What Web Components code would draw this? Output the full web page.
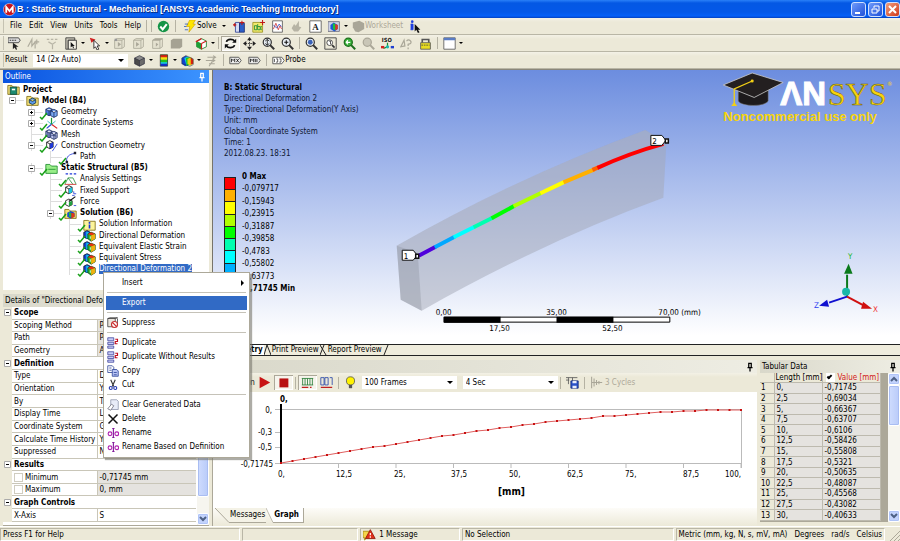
<!DOCTYPE html>
<html lang="en">
<head>
<meta charset="utf-8">
<title>B : Static Structural - Mechanical</title>
<style>
  html, body { height: 100%; }
  body {
    margin: 0;
    font: 8px/10px "DejaVu Sans Condensed", "Open Sans", sans-serif;
    color: #000;
    background: #ece9d8;
    --face: #ece9d8;
    --line: #aca899;
    --pick: #316ac5;
  }
</style>
</head>
<body>
<mech-app></mech-app>

<script>
  // Every icon is drawn on a 16x16 grid
  const cube = (a, b, c) => `<path d="M2 5 8 2l6 3-6 3z" fill="${a}"/><path d="M2 5l6 3v7l-6-3z" fill="${b}"/><path d="M14 5 8 8v7l6-3z" fill="${c}"/><path d="M2 5 8 2l6 3v7l-6 3-6-3zl6 3 6-3M8 8v7" fill="none" stroke="#223" stroke-width=".8"/>`;
  const twin = (a, b) => `<path d="M1 4l4-2 4 2v6l-4 2-4-2zl4 2 4-2M5 6v6" fill="${a}" stroke="#125" stroke-width=".9"/><path d="M7 6l4-2 4 2v6l-4 2-4-2zl4 2 4-2M11 8v6" fill="${b}" stroke="#125" stroke-width=".9"/>`;
  const lens = (fill, stroke, sign) => `<circle cx="6.5" cy="6.5" r="5" fill="${fill}" stroke="${stroke}" stroke-width="1.5"/><path d="M10 10l5 5" stroke="${stroke}" stroke-width="2.5"/>${sign}`;
  const wire = extra => `<path d="M2 4h9v10H2zM2 4l3-2h9l-3 2M14 2v10l-3 2" fill="#e4e1d0" stroke="#aaa798"/>${extra}`;
  const folder = inner => `<path d="M1 3h5l2 2h7v9H1z" fill="#f6e27a" stroke="#7d6a13"/>${inner}`;

  const ICONS = {
    app: `<circle cx="8" cy="8" r="7.5" fill="#c8141c" stroke="#fff" stroke-width=".6"/><path d="M4 12V5l4 5 4-5v7" fill="none" stroke="#fff" stroke-width="2.2"/>`,
    ok: `<circle cx="8" cy="8" r="7" fill="#159447"/><path d="M4 8l3 3.5L12 5" fill="none" stroke="#fff" stroke-width="2.5"/>`,
    bolt: `<path d="M7 0h7l-3 5h3l-8 10 1-7H3z" fill="#ffe600" stroke="#c79a00" stroke-width=".7"/><path d="M1 5h4M0 8h3M1 12h4" stroke="#2a58c0"/>`,
    chartnew: `<path d="M3 3h5v12H3z" fill="#d6dcf4" stroke="#2b3d96"/><path d="M8 4h6v11H8z" fill="#2d5fc8" stroke="#1c2d70"/><path d="M0 6h4M2 4v4M11 1v5M8 3h6" stroke="#c01818" stroke-width="1.3"/>`,
    note: `<path d="M1 3h12v12H1z" fill="#f2e96c" stroke="#96901c"/><path d="M3 7h3v5H3zM7 5v7h3V8H7M12 8h-1v4h1" fill="none" stroke="#183"/><path d="M13 0v6M10 3h6" stroke="#c01818" stroke-width="1.3"/>`,
    figure: `<path d="M2 1h12v14H2z" fill="#fff" stroke="#555"/><path d="M3 11l3-7 3 8 2-5 2 4" fill="none" stroke="#d03030"/><path d="M3 6l4 4 3-5 3 3" fill="none" stroke="#3050c8"/>`,
    ghost: `<path d="M2 10l3-5 2 2 4-6v7l3 1-4 5H5z" fill="#b7b4a5"/>`,
    boxA: `<path d="M1 1h14v14H1z" fill="#fff" stroke="#555"/><text x="4" y="12" font-size="11" font-weight="bold" font-family="Liberation Serif" fill="#222">A</text>`,
    picture: `<path d="M0 2h14v12H0z" fill="#cfd4e8" stroke="#667"/><path d="M3 6l4-3 5 3v5l-4 3-5-3z" fill="#1c56d8"/><path d="M6 4l3 1v8l-3-2z" fill="#19c040"/><path d="M9 5l3 1v5l-3 2z" fill="#e23818"/>`,
    sheet: `<path d="M1 3l8-2 6 3v7l-7 4-4-1-3-5z" fill="#a9a698"/>`,
    info: `<path d="M3 1h2v2H3zM2 5h3v7H2" fill="#1e3ee0" stroke="#1e3ee0"/><path d="M7 5v9l2-2 2 4 2-1-2-3h3z" fill="#111"/>`,
    tag: `<path d="M0 1h13l2 3-2 3H0z" fill="#ddd" stroke="#333"/><path d="M2 4h9" stroke="#111" stroke-dasharray="2 1"/><path d="M6 7v8l2-2 2 3 1-1-1-3h3z" fill="#222"/>`,
    tag2: `<path d="M1 12l5-9v8l4-5v8M9 6h6M12 3v6" fill="none" stroke="#b0ad9e" stroke-width="1.5"/>`,
    tag3: `<path d="M1 3h3M6 3h3M11 3h3M3 6l5 3 4-3M8 9v6" fill="none" stroke="#b8b5a6" stroke-width="1.5"/>`,
    modebox: `<path d="M1 1h11v3H4v11H1z" fill="#ccc9bb" stroke="#333"/><path d="M4 4h10v11H4z" fill="#f4f2e6" stroke="#222"/><path d="M7 6v7l2-2 1 3 1-1-1-2h2z" fill="#111"/>`,
    pick: `<path d="M1 1l7 2-5 4z" fill="#d02020"/><path d="M6 4v10l2-2 2 4 2-1-2-4h3z" fill="#fff" stroke="#111"/>`,
    wire1: wire('<path d="M2 2h3v3H2z" fill="#999"/><path d="M6 6v6l4-3z" fill="#aaa798"/>'),
    wire2: wire('<path d="M5 6v6l4-3z" fill="#aaa798"/>'),
    wire3: wire('<path d="M2 4l3-2h9l-3 2z" fill="#aaa798"/><path d="M6 7v5l3-3z" fill="#aaa798"/>'),
    wire4: `<path d="M1 4l3-2h11v10l-3 2H1z" fill="#a5a293"/>`,
    extend: `<path d="M2 5l6-3 6 3v7l-6 3-6-3z" fill="#fff" stroke="#157a22"/><path d="M2 5l6 3v7l-6-3z" fill="#1da035"/><path d="M8 8v7M8 8l6-3M1 6l7-4" stroke="#d02020" stroke-width="1.5"/>`,
    rotate: `<path d="M3 6c1-4 8-4 10-1M13 10c-1 4-8 4-10 1" fill="none" stroke="#111" stroke-width="2"/><path d="M15 2v5h-5zM1 14V9h5z" fill="#111"/>`,
    pan: `<path d="M8 0l3 4H5zM8 16l3-4H5zM0 8l4-3v6zM16 8l-4-3v6z" fill="#222"/><path d="M8 3v10M3 8h10" stroke="#222" stroke-dasharray="2 1"/>`,
    zoom: lens('#e8eef4', '#333', '<path d="M6.5 3v7M4 5l2.5-2L9 5M4 8l2.5 2L9 8" fill="none" stroke="#111"/>'),
    zoomin: lens('#e8eef4', '#333', '<path d="M6.5 4v5M4 6.5h5" stroke="#111" stroke-width="1.3"/>'),
    zoombox: lens('#e8eef4', '#333', '<circle cx="6.5" cy="6.5" r="3" fill="#3a62b8"/>'),
    zoomfit: `<path d="M1 1h14v14H1z" fill="none" stroke="#333"/><circle cx="7" cy="7" r="3.5" fill="#fff" stroke="#333"/><path d="M10 10l3 3" stroke="#333" stroke-width="2"/><path d="M6 5h2v4" fill="none" stroke="#333"/>`,
    zoomprev: lens('#38b038', '#1c6e1c', '<path d="M9 6.5H4M6 4L4 6.5 6 9" fill="none" stroke="#fff" stroke-width="1.5"/>'),
    zoomnext: lens('#c9c6b7', '#aaa798', ''),
    iso: `<text x="1" y="6" font-size="7" font-weight="bold" fill="#111">ISO</text><path d="M8 7v5l-5 2" fill="none" stroke="#1a9030" stroke-width="1.5"/><circle cx="8" cy="12" r="2" fill="#18b8b0"/><path d="M0 11h4v3H0z" fill="#d02020"/><path d="M12 11h4v3h-4z" fill="#2040d0"/>`,
    look: `<path d="M1 12l4-8 1 7zM8 5c3-3 7 0 5 3l-3 1v2M10 13v2" fill="none" stroke="#aaa798" stroke-width="1.5"/>`,
    lock: `<path d="M4 7V3h8v4" fill="none" stroke="#555" stroke-width="2"/><path d="M2 7h12v8H2z" fill="#e8dc20" stroke="#555"/><path d="M3 10h10" stroke="#444" stroke-dasharray="2 1"/>`,
    window: `<path d="M1 1h14v14H1z" fill="#fff" stroke="#555"/><path d="M1 1h14v3H1z" fill="#5a7cc4"/>`,
    solid: cube('#8b8b8b', '#4a4a4a', '#6b6b6b'),
    bands: `<path d="M4 1h9v14H4z" fill="#1030d0"/><path d="M4 1h9v11H4z" fill="#18c8d8"/><path d="M4 1h9v9H4z" fill="#20c020"/><path d="M4 1h9v6H4z" fill="#f0e010"/><path d="M4 1h9v3H4z" fill="#e02010"/><path d="M4 1h9v14H4z" fill="none" stroke="#333" stroke-width=".8"/>`,
    rainbow: `<path d="M1 5l5-3 4 3v8l-5 2-4-3z" fill="#1040d0"/><path d="M4 5l4-2 3 3v7l-4 2z" fill="#10c8e0"/><path d="M6 5l5-1v8l-4 3z" fill="#20c020"/><path d="M8 6l4-2 3 3v5l-4 2-3-2z" fill="#e8d010"/><path d="M12 4l3 3v5l-3 1z" fill="#e02010"/><path d="M1 5l5-3 9 4v7l-4 2-10-3z" fill="none" stroke="#234" stroke-width=".7"/>`,
    vectors: `<path d="M3 4h10M1 8h10M5 12h7M10 2l3 2-3 2M9 6l3 2-3 2M5 15l4-6" fill="none" stroke="#a9a698" stroke-width="1.3"/>`,
    max: `<path d="M1 4h11l3 4-3 4H1z" fill="#eee" stroke="#444"/><path d="M3 10V6l2 2 2-2v4M9 6l3 4M12 6l-3 4" fill="none" stroke="#111"/>`,
    min: `<path d="M1 4h11l3 4-3 4H1z" fill="#eee" stroke="#444"/><path d="M3 10V6l2 2 2-2v4M9 6v4M11 10V6" fill="none" stroke="#111"/>`,
    probe: `<path d="M1 4h11l3 4-3 4H1z" fill="#fff" stroke="#444"/><path d="M3 6v4M5 6h2v4H5M9 6h2v4H9" fill="none" stroke="#111" stroke-width=".8"/>`,
    pin: `<path d="M5 2h6M6 2v6M10 2v6M4 9h8M8 9v6" stroke="currentColor" stroke-width="2"/>`,
    project: folder('<path d="M4 5h8v9H4z" fill="#1b8a70" stroke="#0e4a3c"/><path d="M6 7h4v2H6z" fill="#fff"/>'),
    model: folder('<path d="M4 7l4-2 4 2v4l-4 2-4-2zl4 2 4-2" fill="#5d9ae8" stroke="#134"/>'),
    geometry: twin('#4d7fe0', '#7aa8f2'),
    coords: `<path d="M8 9V1" stroke="#1b9a30" stroke-width="1.5"/><path d="M8 9l-6 5" stroke="#2448d8" stroke-width="1.5"/><path d="M8 9l7 5" stroke="#d82020" stroke-width="1.5"/><path d="M8 9L3 5M8 9l5-4" stroke="#19b0b8"/>`,
    mesh: twin('#9aa2e0', '#c2c8f4') + '<path d="M3 3v8M9 9h4M13 5v8M7 9l8 1" stroke="#125" stroke-width=".5"/>',
    construct: `<path d="M2 4l4-2 4 2v6l-4 2-4-2zl4 2 4-2M6 6v6" fill="#fff" stroke="#111"/><path d="M6 6l4-2v6l-4 2z" fill="#2038d8"/><path d="M9 15l6-9" stroke="#2038d8"/>`,
    path: `<path d="M3 13c0-6 3-9 10-10" fill="none" stroke="#2038d8"/><path d="M2 12h3v3H2zM12 1h3v3h-3z" fill="#223"/>`,
    static: `<path d="M1 3h5l2 2h7v9H1z" fill="#98ee88" stroke="#1c8a2c"/><path d="M4 9h9" stroke="#1c8a2c"/>`,
    analysis: `<path d="M2 1h3M7 1h3M12 1h3" stroke="#2038d8" stroke-width="1.5"/><path d="M1 14l4-8h6l4 8M5 6l6 8" fill="none" stroke="#2b9040"/><path d="M1 14h14" stroke="#d02020"/>`,
    support: `<path d="M2 4l4-2 4 2v6l-4 2-4-2zl4 2 4-2M6 6v6" fill="#fff" stroke="#111"/><path d="M6 6l4-2v6l-4 2z" fill="#19c4e0"/><path d="M12 9v3h3M10 14h3" stroke="#2038d8" fill="none"/>`,
    force: `<path d="M2 7l4-2 4 2v5l-4 2-4-2z" fill="#fff" stroke="#111"/><path d="M6 8l8-6" stroke="#111" stroke-width="1.5"/><path d="M6 9l4-2v5l-4 2z" fill="#20a040"/><path d="M12 13h3" stroke="#2038d8"/>`,
    solution: folder('<path d="M4 7l4-2 5 2v5l-5 2-4-2z" fill="#1545d8"/><path d="M6 6l3 1v6l-3-1z" fill="#20b840"/><path d="M9 7l4 1v4l-4 2z" fill="#e03a10"/>'),
    solinfo: `<path d="M1 3h5l2 1h7v11H1z" fill="#fdf49a" stroke="#7d6a13"/><path d="M8 5v2M8 8v5" stroke="#1a34d8" stroke-width="2"/>`,
    result: `<path d="M1 4l4-2 4 2v6l-4 2-4-2z" fill="#1545d8" stroke="#012"/><path d="M4 3l3 1v7l-3 1z" fill="#12c0e8"/><path d="M6 6l4-2 5 2v6l-5 3-4-3z" fill="#28b828" stroke="#142"/><path d="M6 6l4-2 5 2-5 2z" fill="#e83010"/><path d="M10 8l5-2v6l-5 3z" fill="#f0b010"/><path d="M9 9v3" stroke="#fff"/>`,
    suppress: `<path d="M1 2h10v11H1zM1 2l3-1h10l-3 1M14 2v9" fill="#e9e4dc" stroke="#333"/><circle cx="10" cy="10" r="4" fill="#fff" stroke="#c83030" stroke-width="1.5"/><path d="M7 7l6 6" stroke="#c83030" stroke-width="1.5"/>`,
    duplicate: `<path d="M1 1h8v4H1zM1 7h8v3H1zM1 12h8v3H1z" fill="#c8cdf5" stroke="#3a3f9a"/><path d="M11 3h3v3h-3v3h3" fill="none" stroke="#c01020" stroke-width="1.5"/>`,
    copy: `<path d="M1 1h6l2 2v7H1z" fill="#fff" stroke="#223a90"/><path d="M7 6h6l2 2v7H7z" fill="#b8c4f4" stroke="#223a90"/><path d="M3 4h3M3 7h3M9 10h4M9 13h4" stroke="#223a90"/>`,
    cut: `<path d="M5 1l4 9M11 1L7 10" stroke="#333" stroke-width="1.5"/><circle cx="5" cy="12" r="2" fill="none" stroke="#2238b0" stroke-width="1.5"/><circle cx="11" cy="12" r="2" fill="none" stroke="#2238b0" stroke-width="1.5"/>`,
    clear: `<path d="M5 1h8l2 2v11H5z" fill="#e8ecf8" stroke="#8a90a8"/><path d="M1 13l5-6 3 2-4 6z" fill="#fff" stroke="#667"/>`,
    remove: `<path d="M2 2l12 12M14 2L2 14" stroke="#111" stroke-width="2"/>`,
    rename: `<circle cx="4" cy="9" r="2.5" fill="none" stroke="#b020b0" stroke-width="1.5"/><circle cx="13" cy="9" r="2.5" fill="none" stroke="#b020b0" stroke-width="1.5"/><path d="M8.5 2v12M7 2h3M7 14h3" stroke="#811a9a" stroke-width="1.5"/>`,
    play: `<path d="M2 1l13 7-13 7z" fill="#c81414"/>`,
    stop: `<path d="M3 3h11v11H3z" fill="#b81010"/>`,
    dist: `<path d="M1 3h14M1 11h14M2 3v8M5 3v8M8 3v8M11 3v8M14 3v8" stroke="#247a34"/><path d="M1 14h8M11 14h2" stroke="#c02020" stroke-width="1.5"/>`,
    keys: `<path d="M1 2h4v9H1zM6 2h4v9H6zM12 2h3v9" fill="none" stroke="#2444a8"/><path d="M1 14h14" stroke="#c02020" stroke-width="1.5"/>`,
    bulb: `<circle cx="8" cy="6" r="5" fill="#fff200" stroke="#555"/><path d="M6 11h4v4H6z" fill="#555"/>`,
    export: `<path d="M0 2h14M3 2v8M0 5h4M8 2v4" stroke="#555"/><path d="M6 6h9v9H6z" fill="#2a52c8" stroke="#122a78"/><path d="M8 6h5v3H8zM8 12h5v3H8z" fill="#e8ecfa"/>`,
    cycles: `<path d="M2 1v14M2 8h13M5 3v10M8 5v6M11 6v4" stroke="#a9a698" stroke-width="1.3"/>`,
    message: `<path d="M0 4h8v8H4l-2 3v-3H0z" fill="#f5d44a" stroke="#a88a10"/><path d="M9 2l6 11H3z" fill="#e03018" stroke="#901408"/><path d="M9 6v3M9 10v2" stroke="#fff" stroke-width="1.5"/>`
  };

  // Registers an element whose shadow root is cloned from a template
  function define(name, html, setup) {
    const template = document.createElement('template');
    template.innerHTML = html;
    customElements.define(name, class extends HTMLElement {
      constructor() {
        super();
        this.attachShadow({ mode: 'open' }).appendChild(template.content.cloneNode(true));
      }
      connectedCallback() {
        if (setup && !this.ready) {
          this.ready = true;
          setup.call(this, this.shadowRoot);
        }
      }
    });
  }

  define('app-icon', `
    <style>
      :host { display: inline-block; width: 13px; height: 13px; flex: none; }
      svg { display: block; width: 100%; height: 100%; }
    </style>
    <svg viewBox="0 0 16 16" aria-hidden="true"></svg>`, function (root) {
    root.querySelector('svg').innerHTML = ICONS[this.getAttribute('name')] || '';
  });

  // Toolbar button: icon, an optional text and an optional drop-down caret
  define('tool-button', `
    <style>
      :host { display: block; flex: none; }
      button {
        display: flex; align-items: center; height: 15px; padding: 0 3px;
        border: 0; background: none; font: inherit; color: inherit;
      }
      :host([drop]) button { padding-right: 1px; }
      :host([pressed]) button { background: #f6f4ec; box-shadow: inset 1px 1px #aca899, inset -1px -1px #fff; }
      :host([dim]) { color: #aca899; }
      i { display: none; margin-left: 3px; border: 2px solid transparent; border-top-color: #000; border-bottom: 0; }
      :host([drop]) i { display: block; }
    </style>
    <button type="button"><slot></slot><i></i></button>`, function (root) {
    const icon = document.createElement('app-icon');
    icon.setAttribute('name', this.getAttribute('icon'));
    const button = root.querySelector('button');
    button.prepend(icon);
    if (!this.textContent) button.setAttribute('aria-label', this.getAttribute('icon'));
  });

  define('tool-bar', `
    <style>
      :host {
        display: flex; align-items: center; box-sizing: border-box; height: 17px; padding-left: 5px;
        background: linear-gradient(#f3f1e6, #ece9d8 4px);
        border-bottom: 1px solid #b9b6a6;
      }
      :host::before { content: ""; width: 2px; height: 14px; margin: 0 1px 0 -3px; border-right: 1px solid #c5c2b2; box-sizing: border-box; }
      ::slotted(hr) { width: 1px; height: 12px; margin: 0 2px; border: 0; background: #b5b2a3; }
    </style>
    <slot></slot>`);

  define('select-box', `
    <style>
      :host { display: grid; height: 13px; background: #fff; align-items: center; }
      select, i { grid-area: 1 / 1; }
      select {
        appearance: none; width: 100%; height: 13px; padding: 0 3px; border: 0;
        background: none; font: inherit; color: inherit;
      }
      i { justify-self: end; margin-right: 4px; border: 3px solid transparent; border-top-color: #000; border-bottom: 0; pointer-events: none; }
    </style>
    <select><option></option></select><i></i>`, function (root) {
    root.querySelector('select').setAttribute('aria-label', this.getAttribute('label'));
    root.querySelector('option').textContent = this.getAttribute('value');
  });

  define('scroll-bar', `
    <style>
      :host { display: flex; flex-direction: column; width: 12px; background: #f6f5ef; }
      button {
        height: 12px; padding: 0; border: 1px solid #fff; border-radius: 2px;
        background: #c3d3fc; box-shadow: inset 0 0 0 1px #b0c4f8;
      }
      svg { display: block; width: 8px; margin: auto; }
      span { flex: var(--thumb, 1); border: 1px solid #fff; border-radius: 2px; background: linear-gradient(90deg, #cfdcfe, #b9cbf9); box-shadow: inset 0 0 0 1px #a9bdf2; }
      i { flex: var(--rest, 1); }
    </style>
    <button type="button" aria-label="Up"><svg viewBox="0 0 8 8"><path d="M1 6l3-3 3 3" fill="none" stroke="#4d6185" stroke-width="2"/></svg></button>
    <span></span><i></i>
    <button type="button" aria-label="Down"><svg viewBox="0 0 8 8"><path d="M1 2l3 3 3-3" fill="none" stroke="#4d6185" stroke-width="2"/></svg></button>`);

  define('panel-title', `
    <style>
      :host {
        display: flex; align-items: center; justify-content: space-between; box-sizing: border-box;
        height: 13px; padding: 0 2px; white-space: nowrap;
        background: linear-gradient(90deg, #d9d8ca, #eeede3);
      }
      :host([active]) { color: #fff; background: linear-gradient(90deg, #0a54e0, #3c94ff); }
      app-icon { width: 10px; height: 10px; }
    </style>
    <slot></slot><app-icon name="pin"></app-icon>`);

  define('title-bar', `
    <style>
      :host {
        display: flex; align-items: center; height: 18px; padding-left: 3px; color: #fff;
        background: linear-gradient(#2a80f8, #0458e4 3px, #0458e8 12px, #0560f8 16px, #0340c0);
      }
      h1 { flex: 1; margin: 0 0 0 1px; font: bold 9px/16px "Liberation Sans", sans-serif; text-shadow: 1px 1px #0a2a80; white-space: nowrap; }
      button { width: 15px; height: 15px; margin-left: 2px; padding: 1px; border: 1px solid #cfe0ff; border-radius: 3px; background: linear-gradient(135deg, #6f9bfb, #1f50d8); }
      button:last-child { background: linear-gradient(135deg, #f0a080, #d03818); }
      svg { display: block; }
    </style>
    <app-icon name="app"></app-icon>
    <h1><slot></slot></h1>
    <button type="button" aria-label="Minimize"><svg viewBox="0 0 11 11"><path d="M2 9h5" stroke="#fff" stroke-width="2"/></svg></button>
    <button type="button" aria-label="Restore"><svg viewBox="0 0 11 11"><path d="M4 4V2h5v5H7M2 5h5v4H2z" fill="none" stroke="#fff"/></svg></button>
    <button type="button" aria-label="Close"><svg viewBox="0 0 11 11"><path d="M2 2l7 7M9 2L2 9" stroke="#fff" stroke-width="2"/></svg></button>`);

  define('menu-bar', `
    <style>
      :host { display: flex; width: 137px; padding-left: 2px; justify-content: space-between; }
      button { padding: 0 3px; border: 0; background: none; font: inherit; }
    </style>`, function (root) {
    for (const name of ['File', 'Edit', 'View', 'Units', 'Tools', 'Help']) {
      const button = document.createElement('button');
      button.type = 'button';
      button.textContent = name;
      root.appendChild(button);
    }
  });

  // depth, icon, label, flags: + collapsed, - expanded, v check mark, b bold, s selected
  const TREE = [
    [0, 'project', 'Project', 'b'],
    [1, 'model', 'Model (B4)', '-b'],
    [2, 'geometry', 'Geometry', '+v'],
    [2, 'coords', 'Coordinate Systems', '+v'],
    [2, 'mesh', 'Mesh', 'v'],
    [2, 'construct', 'Construction Geometry', '-v'],
    [3, 'path', 'Path', 'v'],
    [2, 'static', 'Static Structural (B5)', '-vb'],
    [3, 'analysis', 'Analysis Settings', 'v'],
    [3, 'support', 'Fixed Support', 'v'],
    [3, 'force', 'Force', 'v'],
    [3, 'solution', 'Solution (B6)', '-vb'],
    [4, 'solinfo', 'Solution Information', 'v'],
    [4, 'result', 'Directional Deformation', 'v'],
    [4, 'result', 'Equivalent Elastic Strain', 'v'],
    [4, 'result', 'Equivalent Stress', 'v'],
    [4, 'result', 'Directional Deformation 2', 'vs']
  ];

  define('outline-tree', `
    <style>
      :host { display: block; background: #fff; padding-top: 1px; }
      ul { display: grid; grid-auto-rows: 1fr; height: 191px; margin: 0; padding: 0; list-style: none; }
      li { display: flex; align-items: center; padding-left: calc(var(--depth) * 19px - 14px); min-height: 0; white-space: nowrap; }
      li.root { padding-left: 4px; }
      .twig { align-self: stretch; display: flex; align-items: center; width: 18px; background: linear-gradient(#ddd, #ddd) 4px 0 / 1px 100% no-repeat, linear-gradient(#ddd, #ddd) 4px 50% / 12px 1px no-repeat; }
      li.root .twig { display: none; }
      .top .twig { background: linear-gradient(#ddd, #ddd) 4px 50% / 12px 1px no-repeat; }
      .twig svg { width: 7px; height: 7px; margin-left: 1px; }
      .pic { position: relative; height: 13px; width: 14px; margin-right: 2px; }
      .tick { position: absolute; left: -6px; bottom: -1px; width: 9px; height: 8px; }
      .b { font-weight: bold; }
      .s .name { background: var(--pick); color: #fff; }
    </style>
    <ul role="tree"></ul>`, function (root) {
    root.querySelector('ul').innerHTML = TREE.map(([depth, icon, name, flags]) => {
      const classes = [...flags].filter(f => /[bs]/.test(f));
      if (depth === 0) classes.push('root');
      if (depth === 1) classes.push('top');
      const box = /[+-]/.test(flags)
        ? `<svg viewBox="0 0 7 7"><path d="M.5.5h6v6h-6z" fill="#fff" stroke="#aaa"/><path d="M2 3.5h3${flags.includes('+') ? 'M3.5 2v3' : ''}" stroke="#000"/></svg>` : '';
      const tick = flags.includes('v')
        ? '<svg class="tick" viewBox="0 0 9 8"><path d="M1 5l2 2 5-6" fill="none" stroke="#18a018" stroke-width="1.5"/></svg>' : '';
      return `<li role="treeitem" style="--depth:${depth}" class="${classes.join(' ')}"><span class="twig">${box}</span><span class="pic"><app-icon name="${icon}"></app-icon>${tick}</span><span class="name">${name}</span></li>`;
    }).join('');
  });

  // Group rows hold one item, property rows two; the third marks a read-only value
  const DETAILS = [
    ['Scope'],
    ['Scoping Method', 'Path', 1], ['Path', 'Path', 1], ['Geometry', 'All Bodies', 1],
    ['Definition'],
    ['Type', 'Directional Deformation'], ['Orientation', 'Y Axis'], ['By', 'Time'], ['Display Time', 'Last'],
    ['Coordinate System', 'Global Coordinate System'], ['Calculate Time History', 'Yes'], ['Suppressed', 'No'],
    ['Results'],
    ['Minimum', '-0,71745 mm', 1, 'box'], ['Maximum', '0, mm', 1, 'box'],
    ['Graph Controls'],
    ['X-Axis', 'S']
  ];

  define('details-grid', `
    <style>
      :host { display: flex; background: #fff; border-bottom: 1px solid var(--line); overflow: hidden; }
      table { flex: 1; height: 215px; table-layout: fixed; width: 0; border-collapse: collapse; }
      col:first-child { width: 9px; }
      col:nth-child(2) { width: 85px; }
      th, td { padding: 0 0 0 2px; border-bottom: 1px solid #c9c6b8; text-align: left; font-weight: normal; white-space: nowrap; overflow: hidden; line-height: 9px; }
      td:first-child { background: var(--face); border-color: var(--face); padding: 0; }
      td:last-child { border-left: 1px solid #c9c6b8; }
      .group th { font-weight: bold; border-color: #c9c6b8; }
      .fixed td:last-child { background: #e5e3df; }
      input { appearance: none; width: 9px; height: 9px; margin: 0 2px 0 0; border: 1px solid #d0cdc0; background: #fff; vertical-align: middle; }
      svg { display: block; width: 7px; height: 7px; margin-left: 1px; }
      scroll-bar { --thumb: 11; --rest: 1; margin-left: 1px; }
    </style>
    <table><colgroup><col><col><col></colgroup><tbody></tbody></table><scroll-bar></scroll-bar>`, function (root) {
    const fold = '<svg viewBox="0 0 7 7"><path d="M.5.5h6v6h-6z" fill="#fff" stroke="#aaa"/><path d="M2 3.5h3" stroke="#000"/></svg>';
    root.querySelector('tbody').innerHTML = DETAILS.map(([name, value, fixed, box]) => {
      if (!value) return `<tr class="group"><td>${fold}</td><th colspan="2">${name}</th></tr>`;
      const label = box ? `<label><input type="checkbox">${name}</label>` : name;
      return `<tr class="${fixed ? 'fixed' : ''}"><td></td><th>${label}</th><td>${value}</td></tr>`;
    }).join('');
  });

  const BANDS = ['#ff0000', '#ffb000', '#ffff00', '#b0ff00', '#00ff00', '#00ffb0', '#00ffff', '#00b0ff', '#0050ff'];
  const LEVELS = ['0 Max', '-0,079717', '-0,15943', '-0,23915', '-0,31887', '-0,39858', '-0,4783', '-0,55802', '-0,63773', '-0,71745 Min'];

  define('model-view', `
    <style>
      :host { display: block; position: relative; overflow: hidden; padding: 12px 0 0 11px; box-sizing: border-box; background: linear-gradient(#6c8ddf, #fff 97%); border-left: 1px solid #77746a; }
      .notes { line-height: 11px; color: #101830; }
      .notes b { color: #000; }
      p { margin: 0; }
      .legend { display: flex; gap: 6px; height: 124px; margin-top: 12px; }
      .bands { display: flex; flex-direction: column; width: 12px; margin: 6px 0; box-sizing: border-box; border: 1px solid #222; }
      .bands i { flex: 1; border-bottom: 1px solid #222; }
      .levels { display: flex; flex-direction: column; justify-content: space-between; line-height: 12px; }
      .levels span:first-child, .levels span:last-child { font-weight: bold; }
      svg { position: absolute; inset: 0; width: 100%; height: 100%; }
    </style>
    <div class="notes">
      <p><b>B: Static Structural</b></p><p>Directional Deformation 2</p><p>Type: Directional Deformation(Y Axis)</p>
      <p>Unit: mm</p><p>Global Coordinate System</p><p>Time: 1</p><p>2012.08.23. 18:31</p>
    </div>
    <div class="legend"><div class="bands"></div><div class="levels"></div></div>
    <svg viewBox="212 71 688 274" preserveAspectRatio="xMaxYMin meet">
      <!-- beam -->
      <path d="M396 247Q515 179 645 131L666 144 663 199Q545 242 421 312L400 301z" fill="#a4a8b6" opacity=".5"/>
      <path d="M396 247L417 254 421 312 400 301z" fill="#8a8f9c" opacity=".35"/>
      <path d="M396 247Q515 179 645 131L666 144Q535 190 417 254z" fill="#b4b8c6" opacity=".25"/>
      <!-- result path -->
      <g fill="none" stroke-width="4">
        <path d="M418 257L435 248" stroke="#5000dc"/><path d="M434 248.5L454 238" stroke="#00a8ff"/>
        <path d="M453 238.5L474 228" stroke="#00ffff"/><path d="M473 228.5L492 219" stroke="#00ffb0"/>
        <path d="M491 219.5L514 207" stroke="#00ff00"/><path d="M513 207.5L541 194" stroke="#b0ff00"/>
        <path d="M540 194.5L564 183" stroke="#ffff00"/><path d="M563 183.5L594 170.5" stroke="#ffb000"/>
        <path d="M592 171L598 168.5" stroke="#ff6000"/><path d="M597 169Q630 154 663 145" stroke="#ff0000"/>
      </g>
      <g fill="#fff" stroke="#111">
        <path d="M401.5 251.5h11l4 5-4 5h-11z"/><path d="M415 255.5h3v4h-3z" stroke-width="1.5"/>
        <path d="M650.5 136.5h11l4 5-4 5h-11z"/><path d="M665 140h3v4h-3z" stroke-width="1.5"/>
      </g>
      <text x="403" y="260">1</text><text x="652" y="145">2</text>
      <!-- ruler -->
      <path d="M443.5 318.5h226v5h-226z" fill="#fff" stroke="#000"/><path d="M443 318h57v6h-57zM556 318h57v6h-57z"/>
      <g text-anchor="middle"><text x="443" y="316">0,00</text><text x="499" y="332">17,50</text><text x="556" y="316">35,00</text><text x="612" y="332">52,50</text></g>
      <text x="658" y="316">70,00 (mm)</text>
      <!-- triad -->
      <path d="M847 298V276" stroke="#0b7a1c" stroke-width="2"/><path d="M844 275l4.5-10 4 10z" fill="#0b7a1c"/>
      <path d="M847 298l-18 6" stroke="#1010d0" stroke-width="2"/><path d="M819 307l8-6 2 7z" fill="#1010d0"/>
      <path d="M847 298l17 9" stroke="#d01010" stroke-width="2"/><path d="M872 310l-9-7-2 7z" fill="#d01010"/>
      <circle cx="846" cy="293" r="4" fill="#19b8a8"/>
      <text x="848" y="260" fill="#1ab81a">Y</text><text x="814" y="309" fill="#3040f0">Z</text><text x="873" y="313" fill="#f03030">X</text>
      <!-- logo -->
      <path d="M738 91v11c3 6 27 6 30 0V90l-14 8z" fill="#1d1a1c" stroke="#888" stroke-width=".5"/>
      <path d="M723 86l29-12 31 9.5-29 15z" fill="#231f20" stroke="#ccc" stroke-width=".8"/>
      <path d="M752 82l-18 8v15" fill="none" stroke="#f2cf16" stroke-width="1.3"/><circle cx="752" cy="82" r="1.5" fill="#f2cf16"/><path d="M734 103l-3 4h6z" fill="#f2cf16"/>
      <g role="img" aria-label="ANSYS">
        <text x="780" y="106" font-family="Liberation Sans" font-weight="bold" font-size="33" fill="#fff" stroke="#fff">ΛN</text>
        <text x="828" y="106" font-family="Liberation Serif" font-size="32" fill="#f7d40c" stroke="#6a5a10" stroke-width=".5">SYS</text>
      </g>
      <text x="887" y="87" font-size="6" fill="#f7d40c">®</text>
      <text x="723" y="122" font-family="Liberation Sans" font-weight="bold" font-size="13" fill="#f7d40c">Noncommercial use only</text>
    </svg>`, function (root) {
    root.querySelector('.bands').innerHTML = BANDS.map(c => `<i style="background:${c}"></i>`).join('');
    root.querySelector('.levels').innerHTML = LEVELS.map(t => `<span>${t}</span>`).join('');
  });

  define('view-tabs', `
    <style>
      :host { display: flex; height: 12px; box-sizing: border-box; border: solid #222; border-width: 1px 0; background: #efecdc; }
      button { padding: 0 1px; border: 0; background: none; font: inherit; line-height: 10px; }
      button:first-of-type { background: #fff; font-weight: bold; padding-left: 11px; }
      svg { width: 7px; height: 10px; flex: none; }
      path { fill: none; stroke: #222; }
    </style>
    <button type="button">Geometry</button><svg viewBox="0 0 7 10"><path d="M0 10L3 0 7 10"/></svg>
    <button type="button">Print Preview</button><svg viewBox="0 0 7 10"><path d="M0 0L6 10M0 10L4 0"/></svg>
    <button type="button">Report Preview</button><svg viewBox="0 0 7 10"><path d="M1 10L5 0"/></svg>`);

  const VALUES = [-.71745, -.69034, -.66367, -.63707, -.6106, -.58426, -.55808, -.5321, -.50635, -.48087, -.45568, -.43082, -.40633,
    -.3823, -.3587, -.3355, -.3128, -.2906, -.269, -.248, -.2277, -.2081, -.1892, -.1711, -.1538, -.1374, -.1218, -.1071, -.0933,
    -.0804, -.0684, -.0573, -.0471, -.0378, -.0294, -.0219, -.0155, -.0102, -.006, -.0025, 0];
  const comma = n => Number.isInteger(n) ? n + ',' : String(n).replace('.', ',');

  define('deformation-graph', `
    <style>
      :host { display: block; background: #fff; min-height: 0; }
      svg { display: block; width: 100%; height: 100%; }
    </style>
    <svg viewBox="213 393 544 115" preserveAspectRatio="xMidYMin meet">
      <path d="M275 410.5h466M275 464.5h466M741.5 410v59M275 433.5h6M275 448.5h6" stroke="#bbb" fill="none"/>
      <path id="ticks" stroke="#bbb"/>
      <path d="M281 405v59" stroke="#000" stroke-width="2"/>
      <g text-anchor="end"><text x="272" y="414">0,</text><text x="272" y="436">-0,3</text><text x="272" y="451">-0,5</text><text x="273" y="468">-0,71745</text></g>
      <text x="280" y="403" font-weight="bold">0,</text>
      <g id="labels"></g>
      <text x="498" y="496" font-weight="bold" font-size="10">[mm]</text>
      <path id="curve" fill="none" stroke="#e06060"/>
      <path id="dots" fill="#c81010"/>
    </svg>`, function (root) {
    const points = VALUES.map((v, i) => [281 + i * 11.5, Math.round(410.5 - v * 75)]);
    root.getElementById('curve').setAttribute('d', 'M' + points.map(p => p.join(' ')).join('L'));
    root.getElementById('dots').setAttribute('d', points.map(([x, y]) => `M${x - 1} ${y - 1}h2v2h-2z`).join(''));
    const steps = [0, 1, 2, 3, 4, 5, 6, 7, 8];
    root.getElementById('ticks').setAttribute('d', steps.slice(1).map(i => `M${281 + i * 57.5} 464v5`).join(''));
    root.getElementById('labels').innerHTML = steps.map(i => `<text x="${i === 8 ? 725 : Math.round(278 + i * 57.8)}" y="478">${comma(i * 12.5)}</text>`).join('');
  });

  define('tabular-data', `
    <style>
      :host { display: flex; min-height: 0; background: #aca899; overflow: hidden; }
      table { width: 121px; height: 148px; table-layout: fixed; border-collapse: collapse; background: #e5e3df; }
      col:nth-child(1) { width: 14px; }
      col:nth-child(2) { width: 48px; }
      th, td { padding: 0 0 0 2px; border: solid #bdbaae; border-width: 0 1px 1px 0; text-align: left; font-weight: normal; line-height: 9px; white-space: nowrap; overflow: hidden; }
      th { background: var(--face); padding-left: 1px; }
      thead label { display: flex; align-items: center; gap: 3px; color: #d01818; }
      input { appearance: none; width: 9px; height: 9px; margin: 0 0 0 2px; background: #fff; display: grid; }
      input:checked::after { content: ""; box-sizing: content-box; width: 3px; height: 1px; margin: 2px 1px; border: solid #000; border-width: 0 0 2px 2px; transform: rotate(-45deg); }
      scroll-bar { margin-left: auto; --thumb: 39; --rest: 85; }
    </style>
    <table>
      <colgroup><col><col><col></colgroup>
      <thead><tr><th></th><th>Length [mm]</th><th><label><input type="checkbox" checked>Value [mm]</label></th></tr></thead>
      <tbody></tbody>
    </table>
    <scroll-bar></scroll-bar>`, function (root) {
    root.querySelector('tbody').innerHTML = VALUES.slice(0, 13)
      .map((v, i) => `<tr><th>${i + 1}</th><td>${comma(i * 2.5)}</td><td>${comma(v)}</td></tr>`).join('');
  });

  define('page-tabs', `
    <style>
      :host { display: flex; height: 18px; padding-left: 2px; background: linear-gradient(#fdfcf8, #ece9d8); align-items: flex-start; }
      svg { width: 14px; height: 15px; flex: none; }
      svg.thin { width: 7px; }
      button { height: 15px; padding: 0 1px; border: 0; border-bottom: 1px solid #aca899; background: #f4f2e6; font: inherit; }
      button.on { font-weight: bold; padding-right: 4px; border-right: 1px solid #aca899; background: #fff; }
    </style>
    <svg viewBox="0 0 14 15"><path d="M0 0h14v14.5z" fill="#f4f2e6"/><path d="M0 0l14 14.5" stroke="#aca899"/></svg>
    <button type="button">Messages</button>
    <svg class="thin" viewBox="0 0 14 15" preserveAspectRatio="none"><path d="M0 0h14v14.5z" fill="#fff"/><path d="M0 0l14 14.5" stroke="#aca899"/></svg>
    <button type="button" class="on">Graph</button>`);

  define('status-bar', `
    <style>
      :host { display: flex; gap: 2px; height: 15px; padding-top: 1px; box-sizing: border-box; border-top: 1px solid #fff; }
      div { display: flex; align-items: center; gap: 3px; min-width: 0; padding: 0 2px; box-sizing: border-box; border: 1px solid; border-color: #b9b6a6 #fff #fff #b9b6a6; white-space: nowrap; }
      .help { flex: 245; }
      .blank { flex: 115; }
      .msg { flex: 98; }
      .pick { flex: 215; }
      .units { gap: 7px; }
      .grip { width: 13px; flex: none; }
    </style>
    <div class="help">Press F1 for Help</div><div class="blank"></div>
    <div class="msg"><app-icon name="message"></app-icon>1 Message</div><div class="pick">No Selection</div>
    <div class="units"><span>Metric (mm, kg, N, s, mV, mA)</span><span>Degrees</span><span>rad/s</span><span>Celsius</span></div>
    <svg class="grip" viewBox="0 0 13 13"><path d="M13 3L3 13M13 7l-6 6M13 11l-2 2" stroke="#aca899"/></svg>`);

  define('context-menu', `
    <style>
      :host { display: block; box-sizing: border-box; width: 147px; padding: 3px 2px; border: 1px solid #aca899; background: #fff; box-shadow: 2px 2px 1px #77746a99; }
      button { display: flex; align-items: center; gap: 3px; width: 100%; height: 14px; padding: 0 3px 0 2px; border: 0; background: none; font: inherit; text-align: left; }
      button.on { background: var(--pick); color: #fff; }
      app-icon { width: 12px; height: 12px; margin-left: -1px; }
      hr { height: 1px; margin: 2px 1px 3px; border: 0; background: #c5c2b8; }
      i { margin-left: auto; border: 3px solid transparent; border-left-color: #000; border-right: 0; }
    </style>`, function (root) {
    const items = [['', 'Insert'], 0, ['', 'Export'], 0, ['suppress', 'Suppress'], 0, ['duplicate', 'Duplicate'],
      ['duplicate', 'Duplicate Without Results'], ['copy', 'Copy'], ['cut', 'Cut'], 0, ['clear', 'Clear Generated Data'],
      ['remove', 'Delete'], ['rename', 'Rename'], ['rename', 'Rename Based on Definition']];
    root.innerHTML += items.map(item => item
      ? `<button type="button" role="menuitem" class="${item[1] === 'Export' ? 'on' : ''}"><app-icon name="${item[0]}"></app-icon>${item[1]}${item[1] === 'Insert' ? '<i></i>' : ''}</button>`
      : '<hr>').join('');
  });

  define('mech-app', `
    <style>
      :host { display: flex; flex-direction: column; height: 100vh; position: relative; overflow: hidden; }
      main { flex: 1; min-height: 0; display: grid; grid-template-columns: 209px 1fr; column-gap: 3px; border-top: 1px solid #8a877a; }
      .left { display: flex; flex-direction: column; min-height: 0; padding-left: 3px; }
      outline-tree { flex: 1; }
      .left panel-title:nth-of-type(2) { margin-top: 4px; }
      details-grid { height: 218px; }
      .right { display: grid; grid-template-rows: 1fr auto auto; min-height: 0; min-width: 0; }
      .bottom { display: grid; grid-template-columns: 1fr 140px; column-gap: 3px; height: 166px; margin-top: 4px; }
      .graph, .table { display: flex; flex-direction: column; min-width: 0; min-height: 0; }
      .graph { border-left: 1px solid #aca899; background: #fff; }
      .graph tool-bar { height: 19px; border-bottom: 0; }
      deformation-graph { flex: 1; }
      .table { padding-bottom: 4px; }
      tabular-data { flex: 1; }
      .result { width: 95px; margin: 0 2px 0 6px; }
      .frames { width: 95px; margin: 0 6px 0 2px; }
      .secs { width: 95px; }
      .solve { margin: 0 3px; }
      .gap { width: 6px; }
      context-menu { position: absolute; left: 103px; top: 272px; }
    </style>
    <title-bar>B : Static Structural - Mechanical [ANSYS Academic Teaching Introductory]</title-bar>
    <tool-bar>
      <menu-bar></menu-bar><hr><hr>
      <tool-button icon="ok"></tool-button><hr>
      <tool-button class="solve" icon="bolt" drop>Solve&nbsp;</tool-button>
      <tool-button icon="chartnew"></tool-button><tool-button icon="note"></tool-button><tool-button icon="figure"></tool-button>
      <tool-button icon="ghost"></tool-button><tool-button icon="boxA"></tool-button><tool-button icon="picture" drop></tool-button>
      <tool-button icon="sheet" dim>Worksheet</tool-button><tool-button icon="info"></tool-button>
    </tool-bar>
    <tool-bar>
      <tool-button icon="tag"></tool-button><tool-button icon="tag2"></tool-button><tool-button icon="tag3"></tool-button>
      <tool-button icon="modebox" drop></tool-button><tool-button icon="pick" drop></tool-button>
      <tool-button icon="wire1"></tool-button><tool-button icon="wire2"></tool-button><tool-button icon="wire3"></tool-button><tool-button icon="wire4"></tool-button>
      <span class="gap"></span><tool-button icon="extend" drop></tool-button><hr>
      <tool-button icon="rotate" pressed></tool-button><tool-button icon="pan"></tool-button><tool-button icon="zoom"></tool-button><tool-button icon="zoomin"></tool-button><hr>
      <tool-button icon="zoombox"></tool-button><tool-button icon="zoomfit"></tool-button><tool-button icon="zoomprev"></tool-button><tool-button icon="zoomnext"></tool-button>
      <tool-button icon="iso"></tool-button><tool-button icon="look"></tool-button><tool-button icon="lock"></tool-button><hr>
      <tool-button icon="window" drop></tool-button>
    </tool-bar>
    <tool-bar>
      <span>Result</span><select-box class="result" label="Result scale" value="14 (2x Auto)"></select-box>
      <tool-button icon="solid" drop></tool-button><tool-button icon="bands" drop></tool-button><tool-button icon="rainbow" drop></tool-button><tool-button icon="vectors"></tool-button><hr>
      <tool-button icon="max"></tool-button><tool-button icon="min"></tool-button><hr>
      <tool-button icon="probe">Probe</tool-button>
    </tool-bar>
    <main>
      <div class="left">
        <panel-title active>Outline</panel-title>
        <outline-tree></outline-tree>
        <panel-title>Details of "Directional Deformation 2"</panel-title>
        <details-grid></details-grid>
      </div>
      <div class="right">
        <model-view></model-view>
        <view-tabs></view-tabs>
        <div class="bottom">
          <section class="graph">
            <panel-title>Graph</panel-title>
            <tool-bar>
              <span>Animation</span>
              <tool-button icon="play"></tool-button><tool-button icon="stop" pressed></tool-button><hr>
              <tool-button icon="dist" pressed></tool-button><tool-button icon="keys"></tool-button><hr>
              <tool-button icon="bulb"></tool-button>
              <select-box class="frames" label="Frames" value="100 Frames"></select-box>
              <select-box class="secs" label="Duration" value="4 Sec"></select-box>
              <hr><tool-button icon="export"></tool-button><hr>
              <tool-button icon="cycles" dim>&nbsp;3 Cycles</tool-button>
            </tool-bar>
            <deformation-graph></deformation-graph>
            <page-tabs></page-tabs>
          </section>
          <section class="table">
            <panel-title>Tabular Data</panel-title>
            <tabular-data></tabular-data>
          </section>
        </div>
      </div>
    </main>
    <status-bar></status-bar>
    <context-menu></context-menu>`);
</script>
</body>
</html>
